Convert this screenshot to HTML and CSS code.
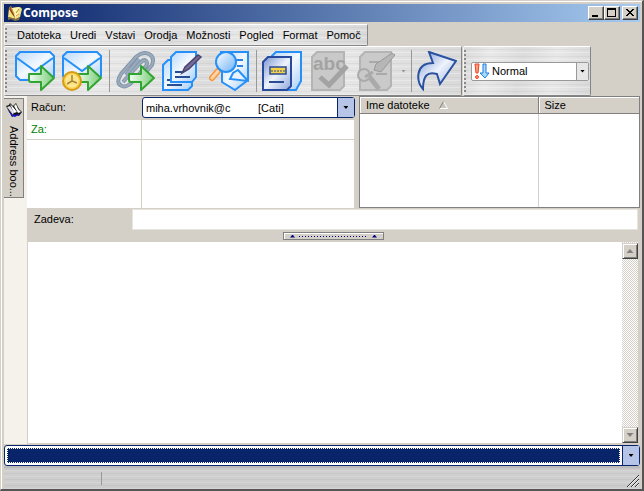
FILE: index.html
```html
<!DOCTYPE html>
<html lang="sl">
<head>
<meta charset="utf-8">
<title>Compose</title>
<link rel="stylesheet" href="styles.css">
</head>
<body>
<div class="window">
  <header class="titlebar">
    <svg class="app-icon" viewBox="0 0 16 16" aria-hidden="true"><path d="M2 3 4 1 5 3 13 2 15 4 13 12 9 14 1 12Z" fill="#f4df83"/><path d="m1 12 8 2 4-2-1 3-4 1-4-2-3 1Z" fill="#86713b"/><path d="m5 3 7-1-1 9-4 1Z" fill="#fff6af"/><path d="M4 1 7 9l1 4-3-4-3-5Z" fill="#884514"/><path d="m12 4-3 4" stroke="#a98231"/><path d="m4 3 3 6M9 11l3-2" stroke="#e7923d"/></svg>
    <h1 class="title">Compose</h1>
    <div class="caption-buttons">
      <button class="caption" aria-label="Minimize"><svg viewBox="0 0 12 10" shape-rendering="crispEdges"><path d="M2 7h6v2H2Z"/></svg></button>
      <button class="caption" aria-label="Maximize"><svg viewBox="0 0 12 10" shape-rendering="crispEdges"><path fill-rule="evenodd" d="M1 0h9v9H1ZM2 2v6h7V2Z"/></svg></button>
      <button class="caption close" aria-label="Close"><svg viewBox="0 0 12 10" shape-rendering="crispEdges"><path d="M2 1h2v1h1v1h2V2h1V1h2v1H9v1H8v1H7v1h1v1h1v1h1v1H8V7H7V6H5v1H4v1H2V7h1V6h1V5h1V4H4V3H3V2H2Z"/></svg></button>
    </div>
  </header>

  <nav class="menubar metal">
    <span class="grip"></span>
    <button>Datoteka</button><button>Uredi</button><button>Vstavi</button><button>Orodja</button><button>Možnosti</button><button>Pogled</button><button>Format</button><button>Pomoč</button>
  </nav>

  <svg class="defs" width="0" height="0" aria-hidden="true">
    <defs>
      <linearGradient id="paper" x1="0" y1="0" x2="1" y2="1"><stop offset="0" stop-color="#b9d9fb"/><stop offset=".5" stop-color="#f3f8fe"/><stop offset="1" stop-color="#a5cdf8"/></linearGradient>
      <linearGradient id="green" x1="0" y1="0" x2="1" y2="0"><stop offset="0" stop-color="#f4fff3"/><stop offset="1" stop-color="#79cc79"/></linearGradient>
      <linearGradient id="navy" x1="0" y1="0" x2="1" y2="1"><stop offset="0" stop-color="#7893d0"/><stop offset=".5" stop-color="#eef3fc"/><stop offset="1" stop-color="#8ca6db"/></linearGradient>
      <linearGradient id="sky" x1="0" y1="0" x2="1" y2="1"><stop offset="0" stop-color="#fff"/><stop offset="1" stop-color="#6db2f7"/></linearGradient>
      <path id="go" d="M14 23h12v-8l13 12-13 12v-8H16q-2 0-2-2Z" fill="url(#green)" stroke="#32a432" stroke-width="2" stroke-linejoin="round"/>
      <g id="mail"><path d="M5 1h30l4 4v20l-4 4H5l-4-4V5Z" fill="url(#paper)" stroke="#2690f8" stroke-width="2"/><path d="m2 7 18 13L38 7" fill="none" stroke="#2690f8" stroke-width="2"/></g>
    </defs>
  </svg>

  <div class="toolbars">
    <div class="toolbar metal" role="toolbar" aria-label="Compose">
      <span class="grip"></span>
      <button class="tool" aria-label="Send"><svg viewBox="0 0 40 40"><use href="#mail"/><use href="#go"/></svg></button>
      <button class="tool" aria-label="Send later"><svg viewBox="0 0 40 40"><use href="#mail"/><use href="#go"/><circle cx="10" cy="30" r="9" fill="#f9d451" stroke="#d79c17" stroke-width="2"/><circle cx="10" cy="30" r="6" fill="#fbe58b" stroke="#fff0ac"/><path d="M10 24v6l5 2M10 30l-5 3" fill="none" stroke="#a98231" stroke-width="1.5"/></svg></button>
      <span class="separator"></span>
      <button class="tool" aria-label="Attach"><svg viewBox="0 0 40 40"><path d="M8 31 26 11q3-3 5-1t0 5L18 30q-6 7-11 5-7-3-1-12L21 6q7-6 13-3t3 11L26 27M11 24 24 8" fill="none" stroke="#8295aa" stroke-width="4"/><path d="M8 31 26 11q3-3 5-1t0 5L18 30q-6 7-11 5-7-3-1-12L21 6q7-6 13-3t3 11L26 27M11 24 24 8" fill="none" stroke="#9aabbc" stroke-width="2"/><use href="#go"/></svg></button>
      <button class="tool" aria-label="Signature"><svg viewBox="0 0 40 40"><path d="M6 9h18l6 4v22l-4 4H1V14Z" fill="url(#paper)" stroke="#2690f8" stroke-width="2"/><path d="M5 29h8M5 34h15" stroke="#244d96" stroke-width="2"/><path d="M14 1h20v25l-4 5H9V6Z" fill="url(#paper)" stroke="#2690f8" stroke-width="2"/><path d="M13 21h7M13 26h15" stroke="#244d96" stroke-width="2"/><path d="m20 22 3-6L36 4l3 2-12 12Z" fill="#736a95" stroke="#4b426d" stroke-width="1.5"/></svg></button>
      <button class="tool" aria-label="Preview"><svg viewBox="0 0 40 40"><path d="M12 1h27v28L26 39 13 31V12Z" fill="url(#paper)" stroke="#2690f8" stroke-width="2"/><path d="M26 9h8M28 15h6" stroke="#2d82e2" stroke-width="2"/><path d="m21 28 3-6 5-3 10 11Z" fill="#e8f3ff" stroke="#2690f8" stroke-width="2"/><path d="m9 20-6 7" stroke="#f19848" stroke-width="6" stroke-linecap="round"/><path d="m9 20-6 7" stroke="#ffd29f" stroke-width="3" stroke-linecap="round"/><circle cx="17" cy="11" r="10" fill="url(#sky)" stroke="#2690f8" stroke-width="2"/></svg></button>
      <span class="separator"></span>
      <button class="tool" aria-label="Encrypt"><svg viewBox="0 0 40 40"><path d="M14 1h25v29l-5 9H10V5Z" fill="url(#paper)" stroke="#2690f8" stroke-width="2"/><path d="M6 6h23v29l-4 4H1V11Z" fill="url(#navy)" stroke="#294b9d" stroke-width="2"/><path d="M8 16h16v7H8Z" fill="#f7d14a" stroke="#284b94" stroke-width="1.5"/><path d="M9 20h15" stroke="#284b94" stroke-dasharray="2 1"/><path d="M7 31h15" stroke="#284b94" stroke-width="2"/></svg></button>
      <button class="tool disabled" aria-label="Spelling" disabled><svg viewBox="0 0 40 40"><path d="M8 1h27v34l-4 4H3V6Z" fill="#c9c9c9" stroke="#b4b4b4" stroke-width="2"/><text class="abc" x="4" y="19">abc</text><path d="m11 26 9 8 18-19" fill="none" stroke="#a3a3a3" stroke-width="5"/></svg></button>
      <button class="tool disabled" aria-label="Sign" disabled><svg viewBox="0 0 40 40"><path d="M9 1h26v34l-4 4H4V6Z" fill="#cacaca" stroke="#b4b4b4" stroke-width="2"/><path d="M13 11h12M20 23h11" stroke="#aaa" stroke-width="2"/><path d="m18 19 2-6L36 2l3 2-14 17Z" fill="#b6b6b6" stroke="#999"/><path d="m12 24 11 14" stroke="#aaa" stroke-width="5"/><circle cx="8" cy="24" r="6" fill="#c9c9c9" stroke="#aaa" stroke-width="2"/><path d="m9 26 8-5" stroke="#aaa" stroke-width="3"/></svg></button>
      <span class="drop faint"></span>
      <span class="separator"></span>
      <button class="tool" aria-label="Forward"><svg viewBox="0 0 40 40"><path d="m12 1 27 9-16 23-3-10C10 20 6 25 6 38-1 30-2 12 16 12Z" fill="url(#navy)" stroke="#2a52a1" stroke-width="2"/></svg></button>
    </div>
    <div class="toolbar metal">
      <span class="grip"></span>
      <div class="priority">
        <svg class="priority-icon" viewBox="0 0 16 16" aria-hidden="true"><path d="M1 1h4L4 10H2Z" fill="#ff9b76" stroke="#e84728"/><circle cx="3" cy="14" r="1.5" fill="#ff9b76" stroke="#e84728"/><path d="M9 1h3v9h3l-4 5-5-5h3Z" fill="#a9d9ff" stroke="#197ddd"/></svg>
        <select aria-label="Priority"><option>Normal</option></select>
        <span class="priority-drop"><span class="drop"></span></span>
      </div>
    </div>
  </div>

  <main class="workspace">
    <aside class="sidebar">
      <button class="side-tab"><svg viewBox="0 0 16 16" aria-hidden="true"><path d="m0 4 3-1 1-2 3 3 3-3 3 6 3 3-3 4-3-1-4 2Z" fill="#111"/><path d="m1 5 3-1 4 6-1 3Z" fill="#ddd"/><path d="m4 2 3 3 4 5-3 1ZM10 2l2 5 3 3-3 1-4-7Z" fill="#fff"/><path d="m1 7 6 6 7-1-5 3-3-1Z" fill="#1713de"/></svg><span>Address boo...</span></button>
    </aside>
    <div class="content">
      <section class="envelope">
        <div class="addresses">
          <label class="name" for="account">Račun:</label>
          <div class="combo">
            <select id="account"><option>miha.vrhovnik@c&nbsp;&nbsp;&nbsp;&nbsp;&nbsp;&nbsp;&nbsp;&nbsp;&nbsp;[Cati]</option></select>
            <span class="combo-drop"><span class="drop"></span></span>
          </div>
          <label class="cell to" for="to">Za:</label>
          <input class="cell" id="to">
          <div class="cell blank"></div>
          <div class="cell blank"></div>
        </div>
        <table class="files">
          <thead><tr><th class="file-name">Ime datoteke <svg viewBox="0 0 9 8" aria-hidden="true"><path d="m4.5.5 4 7h-8" fill="#c9c6c0" stroke="#fff"/><path d="M.5 7.5 4.5.5" stroke="#808080"/></svg></th><th>Size</th></tr></thead>
          <tbody><tr><td></td><td></td></tr></tbody>
        </table>
      </section>
      <div class="subject"><label for="subject">Zadeva:</label><input id="subject"></div>
      <div class="splitter"><button aria-label="Collapse"><span class="up"></span><span class="dots"></span><span class="up"></span></button></div>
      <div class="editor">
        <textarea aria-label="Message"></textarea>
        <div class="scrollbar">
          <button aria-label="Scroll up"><span class="arrow-up"></span></button>
          <button aria-label="Scroll down"><span class="arrow-down"></span></button>
        </div>
      </div>
    </div>
  </main>

  <div class="combo bottom">
    <div class="selection"><select aria-label="Identity"><option></option></select></div>
    <span class="combo-drop"><span class="drop"></span></span>
  </div>
  <footer class="status metal-dark"><span class="panel"></span>
    <svg viewBox="0 0 13 13" aria-hidden="true"><path d="M1 13 13 1M5 13l8-8M9 13l4-4" stroke="#333"/><path d="M2 13 13 2M6 13l7-7M10 13l3-3" stroke="#fff" stroke-width=".7"/></svg>
  </footer>
</div>
</body>
</html>
```
FILE: styles.css
```css
* { box-sizing: border-box; }

body, button, input, select, textarea {
  margin: 0;
  font: 11px "Liberation Sans", Arial, sans-serif;
  color: #000;
}

button, input, select, textarea {
  padding: 0;
  border: 0;
  border-radius: 0;
  background: none;
  appearance: none;
  outline: 0;
}

.window {
  display: flex;
  flex-direction: column;
  height: 100vh;
  padding: 3px 2px 0 3px;
  border-width: 1px 2px 2px 1px;
  border-style: solid;
  border-color: #d4d0c8 #555 #555 #d4d0c8;
  box-shadow: inset 1px 1px #fff;
  background: #d4d0c8;
}

.defs { position: absolute; }

.titlebar {
  display: flex;
  align-items: center;
  height: 18px;
  flex: none;
  padding: 0 2px 0 3px;
  background: linear-gradient(90deg, #0a246a, #a6caf0);
}
.app-icon { width: 16px; height: 16px; }
.title { margin: 0 auto 0 0; font: bold 12px/18px "Noto Sans", sans-serif; color: #fff; }
.caption-buttons { display: flex; }
.caption {
  width: 16px;
  height: 14px;
  border: 1px solid;
  border-color: #fff #404040 #404040 #fff;
  box-shadow: inset -1px -1px #808080;
  background: #d4d0c8;
}
.caption svg { display: block; width: 12px; height: 10px; margin: 1px; }
.caption.close { margin-left: 2px; }

.metal {
  border: 1px solid;
  border-color: #fff #858585 #858585 #f4f4f4;
  border-radius: 2px;
  background:
    repeating-linear-gradient(0deg, rgba(255,255,255,.3) 0 1px, transparent 1px 3px, rgba(150,150,150,.12) 3px 4px, transparent 4px 7px),
    linear-gradient(100deg, #dadada, #e9e9e9 20%, #dcdcdc 45%, #e8e8e8 70%, #d9d9d9);
}
.grip {
  width: 3px;
  align-self: stretch;
  margin: 3px 0;
  background: radial-gradient(circle at 1px 1px, #888 1px, transparent 1px) 0 0 / 3px 4px;
}

.menubar {
  display: flex;
  align-items: center;
  gap: 9px;
  align-self: flex-start;
  flex: none;
  height: 22px;
  margin-top: 2px;
  padding: 0 6px 0 0;
}

.toolbars { display: flex; flex: none; gap: 1px; height: 50px; }
.toolbar { display: flex; align-items: center; gap: 7px; padding: 0 4px 0 0; }
.tool { width: 40px; height: 40px; }
.tool svg { display: block; width: 40px; height: 40px; }
.abc { font: bold 19px "Liberation Sans", sans-serif; fill: #a3a3a3; }
.separator { width: 1px; height: 42px; margin-right: -2px; background: #999; }
.drop {
  width: 5px;
  height: 3px;
  background: #000;
  clip-path: polygon(0 0, 100% 0, 50% 100%);
}
.faint { background: #999; margin: 0 -2px; }

.priority {
  display: flex;
  align-items: center;
  width: 118px;
  height: 19px;
  border: 1px solid #999;
  border-radius: 2px;
  background: #fff;
  margin: 0 -3px;
}
.priority-icon { width: 16px; height: 16px; margin: 0 2px; }
.priority select { flex: 1; min-width: 0; }
.priority-drop {
  display: grid;
  place-items: center;
  width: 12px;
  height: 17px;
  border-left: 1px solid #999;
  background: #e6e6e6;
}

.workspace { display: flex; flex: 1; min-height: 0; }
.sidebar { width: 23px; flex: none; padding-top: 2px; background: #f5f2ec; }
.side-tab {
  display: flex;
  flex-direction: column;
  align-items: center;
  gap: 8px;
  width: 20px;
  height: 100px;
  padding-top: 3px;
  border: 1px solid #808080;
  border-left: 0;
  background: #d4d0c8;
}
.side-tab svg { width: 16px; height: 16px; }
.side-tab span { writing-mode: vertical-rl; white-space: nowrap; }

.content { display: flex; flex: 1; flex-direction: column; min-width: 0; }
.envelope { display: flex; gap: 4px; height: 112px; flex: none; }
.addresses {
  display: grid;
  grid-template: 24px 20px 1fr / 115px 1fr;
  flex: 329;
}
.name { padding: 0 4px; line-height: 22px; }
.cell { min-width: 0; border-right: 1px solid #d4d0c8; border-bottom: 1px solid #d4d0c8; background: #fff; }
.blank { border-bottom: 0; }
.to { padding: 0 4px; line-height: 19px; color: #008000; }

.combo {
  display: flex;
  height: 21px;
  margin-top: 1px;
  border: 1px solid #0a246a;
  border-radius: 3px;
  background: #fff;
}
.combo select { flex: 1; min-width: 0; padding-left: 3px; }
.combo-drop {
  display: grid;
  place-items: center;
  width: 17px;
  border-left: 1px solid #0a246a;
  background: #b6c4e8;
}

.files {
  flex: 280;
  height: 112px;
  table-layout: fixed;
  border: 1px solid #808080;
  border-spacing: 0;
  background: #fff;
}
.files th {
  height: 17px;
  padding: 0 6px;
  border-bottom: 1px solid #808080;
  box-shadow: inset 1px 1px #fff;
  background: #d4d0c8;
  font-weight: normal;
  line-height: 15px;
  text-align: left;
}
.files .file-name { width: 64%; border-right: 1px solid #808080; }
.file-name svg { width: 9px; height: 8px; margin-left: 6px; }
.files td { padding: 0; }
.files td:first-child { border-right: 1px solid #d4d0c8; }

.subject { display: flex; flex: none; height: 22px; }
.subject label { width: 105px; padding-left: 7px; line-height: 22px; }
.subject input { flex: 1; min-width: 0; margin: 1px 2px 0 0; border: 1px solid #e6e4df; background: #fff; }

.splitter { display: flex; flex: none; justify-content: center; height: 12px; padding-top: 2px; }
.splitter button {
  display: flex;
  align-items: center;
  gap: 4px;
  width: 101px;
  height: 8px;
  padding: 0 6px;
  border: 1px solid #808080;
  box-shadow: inset 1px 1px #fff;
}
.up { width: 5px; height: 3px; background: #000080; clip-path: polygon(50% 0, 100% 100%, 0 100%); }
.dots { flex: 1; height: 1px; background: repeating-linear-gradient(90deg, #000080 0 1px, transparent 1px 3px); }

.editor { display: flex; flex: 1; min-height: 0; padding: 0 2px 1px 0; border-left: 1px solid #d4d0c8; }
.editor textarea { flex: 1; min-width: 0; resize: none; background: #fff; }
.scrollbar {
  display: flex;
  flex-direction: column;
  justify-content: space-between;
  width: 16px;
  padding-top: 1px;
  background: repeating-conic-gradient(#fff 0 25%, #d4d0c8 0 50%) 0 0 / 2px 2px;
}
.scrollbar button {
  display: grid;
  place-items: center;
  height: 16px;
  border: 1px solid;
  border-color: #d4d0c8 #404040 #404040 #d4d0c8;
  box-shadow: inset 1px 1px #fff, inset -1px -1px #808080;
  background: #d4d0c8;
}
.arrow-up, .arrow-down { width: 7px; height: 4px; background: #808080; clip-path: polygon(50% 0, 100% 100%, 0 100%); }
.arrow-down { clip-path: polygon(0 0, 100% 0, 50% 100%); }

.bottom { flex: none; }
.selection { display: flex; flex: 1; padding: 2px; }
.bottom select { border: 1px dotted #fff; background: #0a246a; outline: 0; }
.status {
  display: flex;
  align-items: flex-end;
  justify-content: space-between;
  flex: none;
  height: 23px;
}
.metal-dark {
  background:
    repeating-linear-gradient(0deg, rgba(255,255,255,.15) 0 1px, transparent 1px 3px, rgba(130,130,130,.1) 3px 4px, transparent 4px 6px),
    linear-gradient(#bbb, #d0d0d0 5px, #ccc);
}
.panel { width: 98px; height: 13px; margin-bottom: 4px; border-right: 1px solid #999; }
.status svg { width: 13px; height: 13px; margin: 0 1px 2px; }
```
